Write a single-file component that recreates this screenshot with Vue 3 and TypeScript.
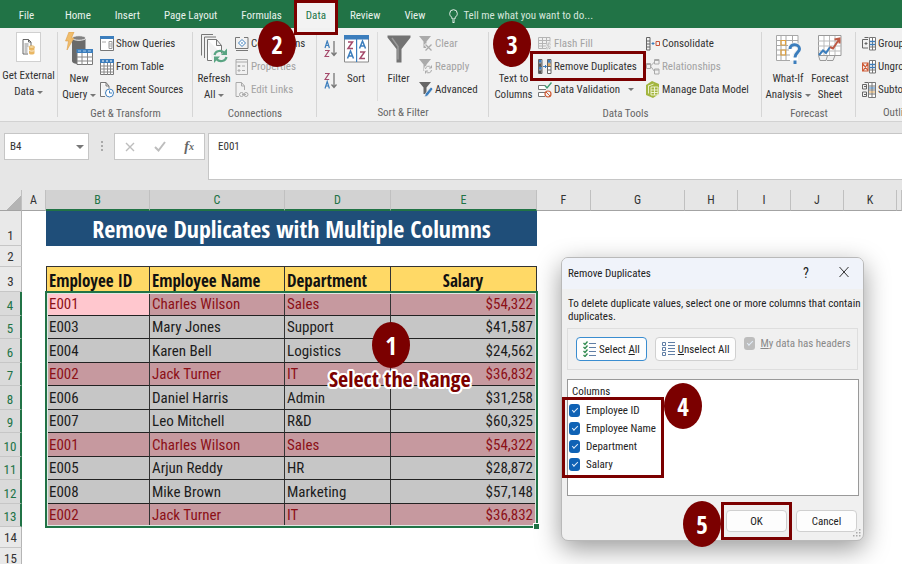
<script setup lang="ts">
import { ref } from 'vue'

interface Employee {
  id: string
  name: string
  department: string
  salary: string
}

interface ColumnChoice {
  label: string
  checked: boolean
}

const tabs: string[] = ['File', 'Home', 'Insert', 'Page Layout', 'Formulas', 'Data', 'Review', 'View']
const activeTab = ref('Data')

const selectedLetters: string[] = ['B', 'C', 'D', 'E']
const letters: string[] = ['A', 'B', 'C', 'D', 'E', 'F', 'G', 'H', 'I', 'J', 'K', '']

const employees: Employee[] = [
  { id: 'E001', name: 'Charles Wilson', department: 'Sales', salary: '$54,322' },
  { id: 'E003', name: 'Mary Jones', department: 'Support', salary: '$41,587' },
  { id: 'E004', name: 'Karen Bell', department: 'Logistics', salary: '$24,562' },
  { id: 'E002', name: 'Jack Turner', department: 'IT', salary: '$36,832' },
  { id: 'E006', name: 'Daniel Harris', department: 'Admin', salary: '$31,258' },
  { id: 'E007', name: 'Leo Mitchell', department: 'R&D', salary: '$60,325' },
  { id: 'E001', name: 'Charles Wilson', department: 'Sales', salary: '$54,322' },
  { id: 'E005', name: 'Arjun Reddy', department: 'HR', salary: '$28,872' },
  { id: 'E008', name: 'Mike Brown', department: 'Marketing', salary: '$57,148' },
  { id: 'E002', name: 'Jack Turner', department: 'IT', salary: '$36,832' },
]

function isDuplicate(e: Employee): boolean {
  return employees.filter((o) => o.id === e.id).length > 1
}

const cellName = ref('B4')
const formula = ref('E001')
const question = ref('')
const hasHeaders = ref(true)

const choices = ref<ColumnChoice[]>([
  { label: 'Employee ID', checked: true },
  { label: 'Employee Name', checked: true },
  { label: 'Department', checked: true },
  { label: 'Salary', checked: true },
])

function setAll(value: boolean): void {
  choices.value.forEach((c) => (c.checked = value))
}
</script>

<template>
  <div class="app">
    <header class="tabs">
      <nav class="tab-list">
        <button
          v-for="tab in tabs"
          :key="tab"
          type="button"
          class="tab"
          :class="{ file: tab === 'File', active: tab === activeTab }"
          @click="activeTab = tab"
        >{{ tab }}<span v-if="tab === 'Data'" class="frame frame-tab"></span></button>
      </nav>
      <label class="tell">
        <svg width="9" height="14" viewBox="0 0 9 14" fill="none" stroke="#e8f2ec">
          <path d="M3 10V8.500C1.500 7.500.7 6.200.7 4.500a3.800 3.800 0 0 1 7.600 0C8.300 6.200 7.500 7.500 6 8.500V10zM3 12h3M3.500 13.500h2" />
        </svg>
        <input v-model="question" type="text" placeholder="Tell me what you want to do..." aria-label="Tell me what you want to do" />
      </label>
    </header>

    <section class="ribbon">
      <div class="group">
        <div class="tools">
          <button type="button" class="big external">
            <span class="tile">
              <svg width="13" height="16" viewBox="0 0 13 16" fill="none">
                <path d="M1 .5h5.500L9 3v4M6 15H1V.5M6.500.5V3H9" stroke="#666" />
                <path d="M2.500 5h4M2.500 7h4M2.500 9h3M2.500 11h3M2.500 13h3" stroke="#888" />
                <path d="M7 8v6.200c0 .7 1.200 1.300 2.700 1.300s2.800-.6 2.800-1.300V8z" fill="#eab865" />
                <ellipse cx="9.700" cy="8" rx="2.800" ry="1.300" fill="#f6dca8" stroke="#e0a646" stroke-width=".6" />
                <path d="M7 11c.5 1.500 5 1.500 5.500 0" stroke="#fff" stroke-width=".7" />
              </svg>
            </span>
            <span>Get External</span><span>Data <i class="caret"></i></span>
          </button>
        </div>
      </div>

      <div class="group">
        <div class="tools">
          <button type="button" class="big">
            <svg width="28" height="34" viewBox="0 0 28 34">
              <path d="M7 6v23c0 1.700 3 3 6.500 3h1V21h6V6z" fill="#6a6a6a" />
              <ellipse cx="14" cy="6" rx="6.800" ry="2.300" fill="#828282" stroke="#f1f1f1" />
              <path d="M4 0h5L6.500 6H9L2 18l1.500-9H.5z" fill="#f0bd6c" stroke="#dda04a" stroke-width=".6" />
              <path d="M12 17.500h15.500v15H12z" fill="#fff" stroke="#777" />
              <path d="M11.500 17h16.500v4H11.500z" fill="#3c7ebd" />
              <path d="M17 21v12M22.500 21v12M12 25h16M12 29h16" stroke="#888" />
              <path d="M13 19h3M18 19h3M23 19h3" stroke="#a9cdec" />
            </svg>
            <span>New</span><span>Query <i class="caret"></i></span>
          </button>
          <div class="stack">
            <button type="button" class="small">
              <svg width="14" height="16" viewBox="0 0 14 16" fill="none">
                <path d="M.5.5h13v14H.5z" fill="#fff" stroke="#777" />
                <path d="M0 0h14v3H0z" fill="#3c7ebd" />
                <path d="M9 5.500h3v7H9z" stroke="#999" />
                <path d="M9 8h3M9 10h3M2 6h4" stroke="#aaa" />
              </svg>Show Queries
            </button>
            <button type="button" class="small">
              <svg width="14" height="16" viewBox="0 0 14 16" fill="none">
                <path d="M.5.5h13v15H.5z" fill="#fff" stroke="#777" />
                <path d="M0 0h14v4H0z" fill="#3c7ebd" />
                <path d="M4 4v12M7.500 4v12M10.500 4v12M0 7h14M0 10h14M0 13h14" stroke="#888" />
                <path d="M2 2h2M6 2h2M10 2h2" stroke="#fff" />
              </svg>From Table
            </button>
            <button type="button" class="small">
              <svg width="14" height="16" viewBox="0 0 14 16" fill="none">
                <path d="M.5.500H6L9 4v2.500M5 14.500H.5V.5M6 .5V4h3" stroke="#777" fill="#fafafa" />
                <circle cx="9.500" cy="11" r="4" fill="#fff" stroke="#3c7ebd" />
                <path d="M9.500 8.500V11H12" stroke="#3c7ebd" />
              </svg>Recent Sources
            </button>
          </div>
        </div>
        <h2 class="caption">Get &amp; Transform</h2>
      </div>

      <div class="group">
        <div class="tools">
          <button type="button" class="big">
            <svg width="27" height="32" viewBox="0 0 27 32" fill="none">
              <path d="M.5 22.500V1.500H12M3.500 25V4H15" stroke="#777" />
              <path d="M6.500 6.500h9l5 6v8M11 27.500H6.500v-21M15.500 6.500v6h5" stroke="#777" fill="#fdfdfd" />
              <path d="M13.500 22c1-4.500 7-5.500 10-2" stroke="#5aa583" stroke-width="2.200" />
              <path d="M25.500 24c-1 4.500-7 5.500-10 2" stroke="#5aa583" stroke-width="2.200" />
              <path d="M26 15.500v6.500h-6zM13 30v-6.500h6z" fill="#5aa583" />
            </svg>
            <span>Refresh</span><span>All <i class="caret"></i></span>
          </button>
          <div class="stack">
            <button type="button" class="small">
              <svg width="14" height="14" viewBox="0 0 14 14" fill="none">
                <path d="M3 .5H.5v11h12.500V.5H11M1 13.500h12M3 .5h2M9 .5h2" stroke="#777" />
                <path d="M7 2.500L10.500 6 7 9.500 3.500 6z" stroke="#3c7ebd" fill="#fff" /><path d="M6 6h2" stroke="#3c7ebd" />
              </svg>Connections
              <span class="badge badge-2">2</span>
            </button>
            <button type="button" class="small" disabled>
              <svg width="13" height="16" viewBox="0 0 13 16" fill="none" stroke="#aaa">
                <path d="M.5.500h11.500v15H.5zM.5 3h11.500M2.500 6.500h2v1h-2zM2.500 11h2v1h-2zM6.500 7h3M6.500 11.500h3" />
              </svg>Properties
            </button>
            <button type="button" class="small" disabled>
              <svg width="14" height="16" viewBox="0 0 14 16" fill="none" stroke="#aaa">
                <path d="M4 14.500H1V.500h5.500L9.500 4v4M6.500.500V4h3" />
                <circle cx="6.500" cy="12.500" r="2" /><circle cx="11" cy="12.500" r="2" /><path d="M7 12.500h4" />
              </svg>Edit Links
            </button>
          </div>
        </div>
        <h2 class="caption">Connections</h2>
      </div>

      <div class="group">
        <div class="tools">
          <div class="stack pair">
            <button type="button" class="order" aria-label="Sort A to Z">
              <svg width="14" height="18" viewBox="0 0 14 18" fill="none">
                <path d="M1 8l2.200-7L5.400 8M1.700 5.500h3" stroke="#3c7ebd" stroke-width="1.200" />
                <path d="M1 10.500h4l-4 6h4.200" stroke="#a54a6b" stroke-width="1.200" />
                <path d="M10 1v14M7.500 12.500L10 15.500l2.500-3" stroke="#777" stroke-width="1.300" />
              </svg>
            </button>
            <button type="button" class="order" aria-label="Sort Z to A">
              <svg width="14" height="18" viewBox="0 0 14 18" fill="none">
                <path d="M1 1.500h4l-4 6h4.200" stroke="#a54a6b" stroke-width="1.200" />
                <path d="M1 16.500l2.200-7 2.200 7M1.700 14h3" stroke="#3c7ebd" stroke-width="1.200" />
                <path d="M10 1v14M7.500 12.500L10 15.500l2.500-3" stroke="#777" stroke-width="1.300" />
              </svg>
            </button>
          </div>
          <button type="button" class="big sort">
            <svg width="25" height="28" viewBox="0 0 25 28" fill="none">
              <path d="M.5.500h24v26.500H.5z" fill="#fff" stroke="#8a8a8a" /><path d="M0 0h25v4.500H0zM12 4h1.200v23H12z" fill="#3c7ebd" />
              <path d="M4 7h4.500L4 13.500h5M16 17h4.500L16 23.500h5" stroke="#a54a6b" stroke-width="1.500" />
              <path d="M3.500 23.500L6.500 16l3 7.500M4.500 21h4M15.500 13.500L18.500 6l3 7.500M16.500 11h4" stroke="#3c7ebd" stroke-width="1.500" />
            </svg>
            <span>Sort</span>
          </button>
          <button type="button" class="big filter">
            <svg width="24" height="28" viewBox="0 0 24 28">
              <path d="M.5.500h23v2L14.500 14v13.500h-5V14L.5 2.500z" fill="#737373" /><path d="M5 3l6 8.500v13" fill="none" stroke="#9b9b9b" stroke-width="1.500" />
            </svg>
            <span>Filter</span>
          </button>
          <div class="stack tight">
            <button type="button" class="small" disabled>
              <svg width="14" height="16" viewBox="0 0 14 16" fill="none">
                <path d="M0 0h12L7.500 5.500V12h-3V5.500z" fill="#aaa" /><path d="M6 8l7 7M13 8l-7 7" stroke="#f1f1f1" stroke-width="3" /><path d="M6.500 8.500l6 6M12.500 8.500l-6 6" stroke="#aaa" stroke-width="1.300" />
              </svg>Clear
            </button>
            <button type="button" class="small" disabled>
              <svg width="14" height="16" viewBox="0 0 14 16" fill="none">
                <path d="M0 0h12L7.500 5.500V12h-3V5.500z" fill="#aaa" /><circle cx="9.500" cy="10.500" r="4.500" fill="#f1f1f1" /><path d="M6.500 10a3 3 0 0 1 5.500-1.500M12.500 11A3 3 0 0 1 7 12.500M12.500 6.500v2.500H10M6.500 14.500V12H9" stroke="#aaa" />
              </svg>Reapply
            </button>
            <button type="button" class="small">
              <svg width="14" height="16" viewBox="0 0 14 16" fill="none">
                <path d="M0 0h12L7.500 5.500V12h-3V5.500z" fill="#666" /><path d="M5.500 15l1-3.500L12 5l2 2-5.500 7z" fill="#3c7ebd" stroke="#f1f1f1" stroke-width=".7" />
              </svg>Advanced
            </button>
          </div>
        </div>
        <h2 class="caption">Sort &amp; Filter</h2>
      </div>

      <div class="group">
        <div class="tools">
          <button type="button" class="big columns">
            <svg width="28" height="32" viewBox="0 0 28 32" fill="none"></svg>
            <span>Text to</span><span>Columns</span>
            <span class="badge badge-3">3</span>
          </button>
          <div class="stack first">
            <button type="button" class="small" disabled>
              <svg width="14" height="16" viewBox="0 0 14 16" fill="none">
                <path d="M.5 1.500h11.500v11H.5zM.5 4.500h11.500M.5 7.500h11.500M.5 10h11.500M4.500 1.500v11M8.500 1.500v11" stroke="#b5b5b5" /><path d="M10 6h3l-2 3.500h2L8 15.500l1.500-5H8z" fill="#c5c5c5" stroke="#f1f1f1" stroke-width=".7" />
              </svg>Flash Fill
            </button>
            <button type="button" class="small target">
              <svg width="14" height="15" viewBox="0 0 14 15" fill="none">
                <path d="M.5.500h3.500v14H.5zM9.500.500H13v14H9.500zM.5 4h3.500M.5 7.500h3.500M.5 11h3.500M9.500 4H13M9.500 7.500H13M9.500 11H13" fill="#fff" stroke="#666" />
                <path d="M1 1h2.500v2.500H1zM1 8h2.500v2.500H1zM10 1h2.500v2.500H10z" fill="#3c7ebd" /><path d="M1 4.500h2.500V7H1zM1 11.500h2.500V14H1z" fill="#555" /><path d="M10 4.500h2.500V7H10z" fill="#e3a755" />
                <path d="M5 7.500h3.500M7 6l1.500 1.500L7 9" stroke="#3c7ebd" />
              </svg>Remove Duplicates
              <span class="frame frame-remove"></span>
            </button>
            <button type="button" class="small">
              <svg width="14" height="16" viewBox="0 0 14 16" fill="none">
                <path d="M7 3.500H.5v4H8M7 10.500H.5v4H7" stroke="#777" fill="#fff" /><path d="M7 3.500l2 2.500L13.500.500" stroke="#3f9c74" stroke-width="1.400" /><circle cx="10" cy="12" r="3" stroke="#cf5a35" stroke-width="1.200" /><path d="M8 10l4 4" stroke="#cf5a35" />
              </svg>Data Validation <i class="caret spaced"></i>
            </button>
          </div>
          <div class="stack second">
            <button type="button" class="small">
              <svg width="14" height="14" viewBox="0 0 14 14" fill="none">
                <path d="M.5.500h3.500v12.500H.5zM.5 4h3.500M.5 7h3.500M.5 10h3.500" stroke="#666" /><path d="M5.500 6.500h3M7 5v3" stroke="#3c7ebd" /><path d="M10 4.500h3.500v4H10z" stroke="#c8553a" />
              </svg>Consolidate
            </button>
            <button type="button" class="small" disabled>
              <svg width="14" height="16" viewBox="0 0 14 16" fill="none" stroke="#aaa">
                <path d="M.5 4.500h4v5h-4zM8.500.500H13v4.500H8.500zM8.500 10H13v5H8.500zM4.500 7L8.500 3M4.500 7l4 5.500" /><path d="M8.500 1.500H13M8.500 11H13M.5 5.500h4" />
              </svg>Relationships
            </button>
            <button type="button" class="small">
              <svg width="14" height="17" viewBox="0 0 14 17" fill="none">
                <path d="M0 4l6-4 7 3v10l-6 4-7-3z" fill="#a3b53f" /><path d="M2.500 4.500v8M2.500 5l5-2M5 6h7v8H5zM5 9h7M5 11.500h7M8.500 6v8" stroke="#f3f6dc" stroke-width=".9" />
              </svg>Manage Data Model
            </button>
          </div>
        </div>
        <h2 class="caption">Data Tools</h2>
      </div>

      <div class="group">
        <div class="tools forecast">
          <button type="button" class="big">
            <svg width="25" height="32" viewBox="0 0 25 32" fill="none">
              <path d="M.5 2.500h21.500v25H.5z" fill="#fff" /><path d="M.5 2.500h21.500v9M14 27.500H.5v-25M5 2v25M10 2v25M16.500 2v8M0 7.500h22M0 12.500h12M0 17h13M0 22h14" stroke="#a8a8a8" />
              <path d="M5 7.500h4.500V12H5zM5 17h4.500v5H5z" stroke="#dfa13f" stroke-width="1.200" />
              <path d="M14 16c0-6 9.500-5.500 9.500 0 0 3.500-4.500 3-4.500 8" stroke="#f1f1f1" stroke-width="5" /><path d="M14 16c0-6 9.500-5.500 9.500 0 0 3.500-4.500 3.500-4.500 8.500" stroke="#3c7ebd" stroke-width="3" /><path d="M17.500 27.500h3v3.500h-3z" fill="#3c7ebd" />
            </svg>
            <span>What-If</span><span>Analysis <i class="caret"></i></span>
          </button>
          <button type="button" class="big">
            <svg width="24" height="32" viewBox="0 0 24 32" fill="none">
              <path d="M.5 2.500h22.500v20H.5z" fill="#fff" stroke="#999" /><path d="M6 3v19M11.500 3v19M17 3v19M0 8h23M0 13h23M0 18h23" stroke="#bbb" />
              <path d="M.5 22.500l1.500 5h6l1.500-5M9 27.500h6l2-5" stroke="#999" />
              <path d="M1 22l4-4.500 3 2.500 4-6" stroke="#3c7ebd" stroke-width="2" /><path d="M12 14l3 1.500L21 6.500M16.500 6.500L21.500 5.500v5" stroke="#bd5a45" stroke-width="2" />
            </svg>
            <span>Forecast</span><span>Sheet</span>
          </button>
        </div>
        <h2 class="caption">Forecast</h2>
      </div>

      <div class="group last">
        <div class="tools">
          <div class="stack">
            <button type="button" class="small">
              <svg width="14" height="14" viewBox="0 0 14 14" fill="none">
                <path d="M6 2.500H.5v8.500H6M2.500 6.500h3M4 5v3M2.500.500h4" stroke="#666" /><path d="M7.500.500h6v12.500h-6zM10.500.500V13M7.500 10h6" stroke="#777" fill="#fff" /><path d="M8 4.500h5M8 7.500h5" stroke="#3c7ebd" stroke-width="1.400" />
              </svg>Group
            </button>
            <button type="button" class="small">
              <svg width="14" height="14" viewBox="0 0 14 14" fill="none">
                <path d="M.5 3h5.500v8H.5zM1 11L6 3M1 4l4.500 6" stroke="#cf5a35" stroke-width="1.200" /><path d="M7.500.500h6v12.500h-6zM10.500.500V13M7.500 10h6" stroke="#777" fill="#fff" /><path d="M8 4.500h5M8 7.500h5" stroke="#3c7ebd" stroke-width="1.400" />
              </svg>Ungroup
            </button>
            <button type="button" class="small">
              <svg width="14" height="16" viewBox="0 0 14 16" fill="none">
                <path d="M4.500 2.500H.5V7h4zM4.500 10H.5v4.500h4zM2 4.500h2M2 12.500h2M2.500.500H6" stroke="#666" /><path d="M6.500.500h7v15h-7zM10 .5v15M6.500 4h7M6.500 8h7M6.500 12h7" stroke="#777" fill="#fff" /><path d="M7 6h6" stroke="#3c7ebd" /><path d="M7 10h6" stroke="#e3a755" />
              </svg>Subtotal
            </button>
          </div>
        </div>
        <h2 class="caption">Outline</h2>
      </div>
    </section>

    <section class="formula-bar">
      <div class="name-box">
        <input v-model="cellName" type="text" aria-label="Name box" />
        <button type="button" aria-label="Named cells"><i class="caret wide"></i></button>
      </div>
      <span class="dots"><i></i><i></i><i></i></span>
      <div class="entry-buttons">
        <button type="button" aria-label="Cancel entry">
          <svg width="10" height="10" viewBox="0 0 10 10"><path d="M1 1l8 8M9 1L1 9" stroke="#bdbdbd" stroke-width="1.400" /></svg>
        </button>
        <button type="button" aria-label="Enter">
          <svg width="12" height="11" viewBox="0 0 12 11"><path d="M1 6l3.500 3.500L11 1" fill="none" stroke="#bdbdbd" stroke-width="2" /></svg>
        </button>
        <button type="button" class="fx" aria-label="Insert function">f<sub>x</sub></button>
      </div>
      <textarea v-model="formula" aria-label="Formula" rows="1"></textarea>
    </section>

    <main class="sheet">
      <table class="grid">
        <colgroup>
          <col class="w-rows" /><col class="w-a" /><col class="w-b" /><col class="w-c" /><col class="w-d" /><col class="w-e" />
          <col class="w-f" /><col class="w-g" /><col class="w-h" /><col class="w-h" /><col class="w-h" /><col class="w-h" /><col />
        </colgroup>
        <thead>
          <tr>
            <th class="corner"></th>
            <th v-for="(letter, i) in letters" :key="i" class="letter" :class="{ on: selectedLetters.includes(letter) }">{{ letter }}</th>
          </tr>
        </thead>
        <tbody>
          <tr class="r-title">
            <th class="num">1</th>
            <td></td>
            <td class="title" colspan="4">Remove Duplicates with Multiple Columns</td>
            <td colspan="7"></td>
          </tr>
          <tr class="r-gap">
            <th class="num">2</th>
            <td></td>
            <td class="above" colspan="4"></td>
            <td colspan="7"></td>
          </tr>
          <tr class="r-head">
            <th class="num">3</th>
            <td></td>
            <th class="head edge">Employee ID</th>
            <th class="head">Employee Name</th>
            <th class="head">Department</th>
            <th class="head middle">Salary</th>
            <td colspan="7"></td>
          </tr>
          <tr v-for="(e, i) in employees" :key="i" class="r-data" :class="{ dup: isDuplicate(e) }">
            <th class="num on">{{ i + 4 }}</th>
            <td></td>
            <td class="cell edge" :class="{ current: i === 0 }">{{ e.id }}</td>
            <td class="cell">{{ e.name }}</td>
            <td class="cell">{{ e.department }}</td>
            <td class="cell money">{{ e.salary }}</td>
            <td colspan="7"></td>
          </tr>
          <tr v-for="n in [14, 15]" :key="n" class="r-blank">
            <th class="num">{{ n }}</th>
            <td colspan="12"></td>
          </tr>
        </tbody>
      </table>

      <div class="selection"><i class="handle"></i></div>
      <span class="badge badge-1">1</span>
      <span class="callout">Select the Range</span>

      <form class="dialog" @submit.prevent>
        <div class="dialog-head">
          <h1>Remove Duplicates</h1>
          <button type="button" class="help" aria-label="Help">?</button>
          <button type="button" aria-label="Close">
            <svg width="10" height="12" viewBox="0 0 10 12"><path d="M.5 1l9 10M9.500 1l-9 10" stroke="#333" fill="none" /></svg>
          </button>
        </div>
        <p>To delete duplicate values, select one or more columns that contain duplicates.</p>
        <div class="options">
          <button type="button" class="push chosen" @click="setAll(true)">
            <svg width="13" height="16" viewBox="0 0 13 16" fill="none">
              <path d="M.5 2L2 3.500 4.500.500M.5 6L2 7.500 4.500 4.500M.5 10L2 11.500 4.500 8.500M.5 14L2 15.500 4.500 12.500" stroke="#2f8a4e" stroke-width="1.300" /><path d="M6 2.500h7M6 6.500h7M6 10.500h7M6 14.500h7" stroke="#5f7ea5" />
            </svg><span>Select <u>A</u>ll</span>
          </button>
          <button type="button" class="push" @click="setAll(false)">
            <svg width="13" height="16" viewBox="0 0 13 16" fill="none">
              <path d="M.5 1.500h3v3h-3zM.5 6.500h3v3h-3zM.5 11.500h3v3h-3zM6 1.500h7M6 4.500h7M6 7.500h7M6 10.500h7M6 13.500h7" stroke="#5f7ea5" />
            </svg><span><u>U</u>nselect All</span>
          </button>
          <label class="check muted"><input v-model="hasHeaders" type="checkbox" disabled /><span><u>M</u>y data has headers</span></label>
        </div>
        <div class="list">
          <h3>Columns</h3>
          <div class="choices">
            <label v-for="c in choices" :key="c.label" class="check"><input v-model="c.checked" type="checkbox" />{{ c.label }}</label>
            <span class="frame frame-list"></span>
            <span class="badge badge-4">4</span>
          </div>
        </div>
        <div class="actions">
          <button type="submit" class="push plain">OK<span class="frame frame-ok"></span><span class="badge badge-5">5</span></button>
          <button type="button" class="push plain">Cancel</button>
        </div>
        <svg class="grip" width="8" height="8" viewBox="0 0 8 8" fill="#aaa"><path d="M6 0h1.500v1.500H6zM6 3h1.500v1.500H6zM3 3h1.500v1.500H3zM6 6h1.500v1.500H6zM3 6h1.500v1.500H3zM0 6h1.500v1.500H0z" /></svg>
      </form>
    </main>
  </div>
</template>

<style>
body {
  margin: 0;
}
</style>

<style scoped>
.app {
  display: flex;
  flex-direction: column;
  height: 100vh;
  overflow: hidden;
  background: #fff;
  color: #333;
  font: 11px/16px "Roboto Condensed", Roboto, "Liberation Sans", sans-serif;
}
*,
*::before,
*::after {
  box-sizing: border-box;
}
button,
input,
textarea {
  margin: 0;
  padding: 0;
  border: 0;
  background: none;
  color: inherit;
  font: inherit;
}
svg {
  flex: none;
}

/* Tabs */
.tabs {
  display: flex;
  flex: none;
  height: 28px;
  background: #217346;
  color: #e8f2ec;
}
.tab-list {
  display: flex;
}
.tab {
  position: relative;
  padding: 4px 12px 0;
  white-space: nowrap;
}
.tab.file {
  width: 53px;
}
.tab.active {
  background: linear-gradient(#217346 3px, #f3f3f3 3px);
  color: #217346;
}
.tell {
  display: flex;
  flex: 1;
  align-items: center;
  gap: 5px;
  padding: 3px 12px 0;
}
.tell input {
  flex: 1;
  min-width: 0;
}
.tell input::placeholder {
  color: #d5e6dc;
  opacity: 1;
}

/* Ribbon */
.ribbon {
  display: grid;
  flex: none;
  grid-template-columns: 58px 135px 124px 172px 273px 94px 1fr;
  border-bottom: 1px solid #d2d2d2;
  background: #f1f1f1;
}
.group {
  display: flex;
  position: relative;
  flex-direction: column;
  min-width: 0;
  height: 93px;
  padding-top: 4px;
}
.group:not(.last)::after {
  position: absolute;
  top: 4px;
  right: 0;
  bottom: 4px;
  width: 1px;
  background: #d6d6d6;
  content: "";
}
.last {
  overflow: hidden;
}
.last .stack {
  padding-left: 6px;
}
.last .caption {
  padding-left: 27px;
  text-align: left;
}
.tools {
  display: flex;
  height: 70px;
}
.caption {
  margin: 4px 0 0;
  color: #666;
  font: inherit;
  text-align: center;
  white-space: nowrap;
}
.big {
  display: flex;
  position: relative;
  flex: none;
  flex-direction: column;
  align-items: center;
  width: 42px;
  white-space: nowrap;
}
.big > svg {
  height: 39px;
  padding-bottom: 5px;
}
.external {
  width: 57px;
}
.tile {
  display: flex;
  align-items: center;
  justify-content: center;
  width: 25px;
  height: 30px;
  margin-bottom: 6px;
  border: 1px solid #d0d0d0;
  background: #fff;
}
.stack {
  display: flex;
  flex: none;
  flex-direction: column;
}
.small {
  display: flex;
  position: relative;
  align-items: center;
  gap: 2px;
  height: 23px;
  white-space: nowrap;
}
.small > svg {
  width: 14px;
}
.small:disabled {
  color: #a3a3a3;
}
.pair {
  justify-content: space-between;
  width: 22px;
  padding: 8px 0 6px 6px;
}
.sort {
  width: 34px;
}
.filter {
  width: 42px;
  margin-left: 4px;
  border-left: 1px solid #dcdcdc;
}
.columns {
  width: 49px;
}
.second {
  margin-left: 10px;
}
.first {
  position: relative;
  z-index: 1;
  width: 98px;
}
.forecast {
  padding-left: 5px;
}
.caret {
  display: inline-block;
  border: 3px solid transparent;
  border-top-color: #777;
  border-bottom: 0;
  vertical-align: middle;
}
.caret.wide {
  border-width: 4px 4px 0;
}
.caret.spaced {
  margin-left: 6px;
}

/* Formula bar */
.formula-bar {
  display: flex;
  flex: none;
  align-items: flex-start;
  height: 68px;
  padding: 11px 0 0 4px;
  background: #e6e6e6;
}
.name-box {
  display: flex;
  width: 85px;
  height: 27px;
  padding: 0 4px 0 5px;
  border: 1px solid #c6c6c6;
  background: #fff;
}
.name-box input {
  flex: 1;
  min-width: 0;
}
.dots {
  display: flex;
  flex-direction: column;
  gap: 2px;
  align-items: center;
  width: 25px;
  padding-top: 8px;
}
.dots i {
  width: 2px;
  height: 2px;
  background: #aaa;
}
.entry-buttons {
  display: flex;
  width: 91px;
  height: 27px;
  margin-right: 3px;
  border: 1px solid #c6c6c6;
  background: #fff;
}
.entry-buttons button {
  display: flex;
  flex: 1;
  align-items: center;
  justify-content: center;
}
.entry-buttons .fx {
  color: #666;
  font: italic bold 14px/16px "Liberation Serif", serif;
}
.fx sub {
  font-size: 10px;
}
textarea {
  flex: 1;
  height: 47px;
  padding: 5px 9px;
  border: 1px solid #c6c6c6;
  border-right: 0;
  background: #fff;
  resize: none;
}

/* Sheet */
.sheet {
  position: relative;
  flex: 1;
}
.grid {
  width: 100%;
  border-collapse: separate;
  border-spacing: 0;
  table-layout: fixed;
}
.w-rows { width: 22px; }
.w-a { width: 24px; }
.w-b { width: 104px; }
.w-c { width: 135px; }
.w-d { width: 106px; }
.w-e { width: 146px; }
.w-f { width: 54px; }
.w-g { width: 94px; }
.w-h { width: 53px; }
td,
th {
  padding: 0;
  overflow: hidden;
  white-space: nowrap;
}
.corner,
.letter {
  height: 21px;
  border-right: 1px solid #c0c0c0;
  border-bottom: 1px solid #a3a3a3;
  background: #e6e6e6;
  color: #333;
  font-size: 12px;
  font-weight: 400;
}
.corner {
  background: linear-gradient(135deg, #e6e6e6 65%, #b4b4b4 65%);
}
.letter.on {
  border-bottom: 2px solid #217346;
  background: #d2d2d2;
  color: #217346;
}
.num {
  border-right: 1px solid #b5b5b5;
  border-bottom: 1px solid #c6c6c6;
  background: #e9e9e9;
  font-size: 13px;
  font-weight: 400;
  line-height: 18px;
  text-align: center;
  vertical-align: bottom;
}
.num.on {
  border-right: 2px solid #217346;
  background: #dadada;
  color: #217346;
}
.r-title { height: 35px; }
.r-gap { height: 21px; }
.r-head { height: 25px; }
.r-data { height: 24px; }
.r-data:nth-child(odd) { height: 23px; }
.r-blank { height: 21px; }
.title {
  background: #1f4e79;
  color: #fff;
  font: bold 24px/34px "Open Sans Condensed", "Roboto Condensed", sans-serif;
  text-align: center;
}
.above {
  border-bottom: 1px solid #333;
}
.head {
  padding: 2px 3px 0 2px;
  border-right: 1px solid #333;
  background: #ffd966;
  color: #111;
  font: bold 17px/22px "Open Sans Condensed", "Roboto Condensed", sans-serif;
  text-align: left;
}
.edge {
  border-left: 1px solid #333;
}
.middle {
  text-align: center;
}
.cell {
  padding: 0 3px 0 2px;
  border-right: 1px solid #333;
  border-bottom: 1px solid #222;
  background: #c6c6c6;
  color: #1c1c1c;
  font-size: 15px;
  line-height: 22px;
}
.dup .cell {
  background: #c6999f;
  color: #8c1017;
}
.dup .current {
  background: #ffc7ce;
}
.money {
  text-align: right;
}
.selection {
  position: absolute;
  top: 101px;
  left: 45px;
  width: 493px;
  height: 237px;
  border: 2px solid #217346;
  box-shadow: inset 0 0 0 1px #dfe9e3;
}
.handle {
  position: absolute;
  right: -3px;
  bottom: -3px;
  width: 6px;
  height: 6px;
  border: 1px solid #fff;
  border-width: 1px 0 0 1px;
  background: #217346;
}

/* Step markers */
.badge {
  display: flex;
  position: absolute;
  z-index: 3;
  align-items: center;
  justify-content: center;
  width: 38px;
  height: 46px;
  border-radius: 50%;
  background: #7b0000;
  color: #fff;
  font: bold 25px/46px "Open Sans Condensed", "Open Sans", sans-serif;
}
.badge-1 {
  top: 132px;
  left: 372px;
}
.badge-2 {
  top: -11px;
  left: 23px;
}
.badge-3 {
  top: -11px;
  left: 4px;
}
.badge-4 {
  top: -15px;
  left: 95px;
}
.badge-5 {
  top: -10px;
  left: -44px;
}
.callout {
  position: absolute;
  top: 174px;
  left: 329px;
  color: #7b0000;
  font: bold 22px/28px "Open Sans Condensed", "Roboto Condensed", sans-serif;
  text-shadow: 2px 0 #fff, -2px 0 #fff, 0 2px #fff, 0 -2px #fff, 1px 2px #fff, -1px 2px #fff, 1px -2px #fff, -1px -2px #fff, 2px 1px #fff, -2px 1px #fff, 2px -1px #fff, -2px -1px #fff;
  white-space: nowrap;
}
.frame {
  position: absolute;
  z-index: 2;
  border: 3px solid #7b0000;
  pointer-events: none;
}
.frame-tab {
  inset: 0 0 -7px;
}
.frame-remove {
  inset: -4px -10px -3px -8px;
}
.frame-list {
  inset: -1px auto auto -7px;
  width: 102px;
  height: 81px;
}
.frame-ok {
  inset: -9px -6px;
}

/* Dialog */
.dialog {
  position: absolute;
  top: 67px;
  left: 561px;
  width: 303px;
  border: 1px solid #b9b9b9;
  border-radius: 7px;
  background: #f0f0f0;
  box-shadow: 0 8px 26px rgba(0, 0, 0, 0.4);
  color: #222;
  line-height: 13px;
}
.dialog-head {
  display: flex;
  align-items: center;
  height: 31px;
  padding: 0 14px 0 6px;
  border-radius: 6px 6px 0 0;
  background: #f0f3fa;
}
h1,
h3 {
  margin: 0;
  font: inherit;
}
h1 {
  flex: 1;
}
.help {
  margin-right: 30px;
  font-size: 14px;
}
.dialog p {
  margin: 8px 0 5px 6px;
}
.options {
  display: flex;
  gap: 8px;
  margin: 0 5px;
  padding: 8px;
  border: 1px solid #dedede;
}
.push {
  display: flex;
  position: relative;
  gap: 3px;
  align-items: center;
  justify-content: center;
  height: 24px;
  padding: 0 6px;
  border: 1px solid #d0d0d0;
  border-radius: 4px;
  background: #fdfdfd;
  white-space: nowrap;
}
.chosen {
  border-color: #3a8dd0;
}
.check {
  display: flex;
  gap: 6px;
  align-items: center;
  white-space: nowrap;
}
.muted {
  gap: 5px;
  align-self: flex-start;
  height: 13px;
  color: #888;
}
.check input {
  flex: none;
  width: 11px;
  height: 13px;
  border-radius: 3px;
  background: #0f62b5;
  appearance: none;
}
.muted input {
  background: #bdbdbd;
}
.check input:checked::after {
  display: block;
  width: 6px;
  height: 3px;
  margin: 4px auto 0;
  border: solid #e3eefa;
  border-width: 0 0 1px 1px;
  transform: rotate(-45deg);
  content: "";
}
.list {
  height: 117px;
  margin: 9px 4px 0 5px;
  padding: 5px 0 0 1px;
  border: 1px solid #999;
  background: #fff;
}
.list h3 {
  padding: 0 3px;
}
.choices {
  position: relative;
  width: 94px;
  padding-top: 3px;
}
.choices .check {
  height: 18px;
}
.actions {
  display: flex;
  gap: 9px;
  justify-content: flex-end;
  padding: 14px 6px 8px;
}
.plain {
  width: 61px;
  height: 22px;
}
.grip {
  position: absolute;
  right: 2px;
  bottom: 3px;
}
</style>
